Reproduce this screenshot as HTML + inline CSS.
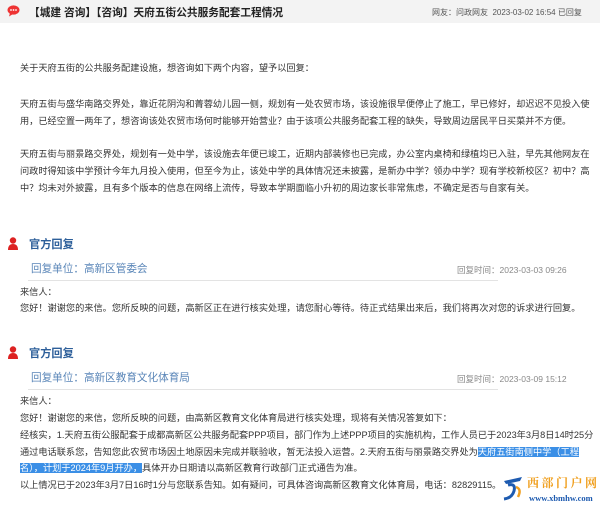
<!DOCTYPE html><html><head><meta charset="utf-8"><style>
body{margin:0;width:600px;height:508px;background:#fff;font-family:"Liberation Sans","Noto Sans CJK SC",sans-serif;color:#333;position:relative;overflow:hidden}
.a{position:absolute;white-space:nowrap;font-size:9.2px}
.hd{position:absolute;left:0;top:0;width:600px;height:23px;background:#f3f3f3}
.blue{color:#2d5f9a}
.sub{color:#5a86b8;font-size:10.6px}
.gr{color:#888;font-size:8.5px}
.line{position:absolute;height:1px;background:#e3e3e3}
.hl{background:#3b8fe6;color:#fff}
</style></head><body>
<div class="hd"></div>
<svg style="position:absolute;left:7px;top:5px" width="13" height="12" viewBox="0 0 13 12"><ellipse cx="6.5" cy="5" rx="6" ry="4.6" fill="#e33"/><path d="M3 8 L2 11.5 L6 9" fill="#e33"/><circle cx="4" cy="5" r=".9" fill="#fff"/><circle cx="6.5" cy="5" r=".9" fill="#fff"/><circle cx="9" cy="5" r=".9" fill="#fff"/></svg>
<div class="a" style="left:29px;top:5px;font-size:10.7px;font-weight:bold;color:#222">【城建 咨询】【咨询】天府五街公共服务配套工程情况</div>
<div class="a" style="left:432px;top:7px;font-size:8px;color:#555">网友：问政网友&nbsp; 2023-03-02 16:54 已回复</div>
<div class="a" style="left:20px;top:60px">关于天府五街的公共服务配建设施，想咨询如下两个内容，望予以回复：</div>
<div class="a" style="left:20px;top:96px">天府五街与盛华南路交界处，靠近花阴沟和菁蓉幼儿园一侧，规划有一处农贸市场，该设施很早便停止了施工，早已修好，却迟迟不见投入使</div>
<div class="a" style="left:20px;top:113px">用，已经空置一两年了，想咨询该处农贸市场何时能够开始营业？由于该项公共服务配套工程的缺失，导致周边居民平日买菜并不方便。</div>
<div class="a" style="left:20px;top:146px">天府五街与丽景路交界处，规划有一处中学，该设施去年便已竣工，近期内部装修也已完成，办公室内桌椅和绿植均已入驻，早先其他网友在</div>
<div class="a" style="left:20px;top:163px">问政时得知该中学预计今年九月投入使用，但至今为止，该处中学的具体情况还未披露，是新办中学？领办中学？现有学校新校区？初中？高</div>
<div class="a" style="left:20px;top:180px">中？均未对外披露，且有多个版本的信息在网络上流传，导致本学期面临小升初的周边家长非常焦虑，不确定是否与自家有关。</div>
<svg style="position:absolute;left:7px;top:237px" width="12" height="13" viewBox="0 0 12 13"><circle cx="6" cy="3.5" r="3.2" fill="#d22"/><path d="M1 13 Q1 7 6 7 Q11 7 11 13Z" fill="#d22"/></svg>
<div class="a blue" style="left:29px;top:236px;font-size:11.2px;font-weight:bold">官方回复</div>
<div class="a sub" style="left:31px;top:261px">回复单位：高新区管委会</div>
<div class="a gr" style="left:457px;top:264px">回复时间：2023-03-03 09:26</div>
<div class="line" style="left:28px;top:280px;width:470px"></div>
<div class="a" style="left:20px;top:284px">来信人：</div>
<div class="a" style="left:20px;top:300px">您好！谢谢您的来信。您所反映的问题，高新区正在进行核实处理，请您耐心等待。待正式结果出来后，我们将再次对您的诉求进行回复。</div>
<svg style="position:absolute;left:7px;top:346px" width="12" height="13" viewBox="0 0 12 13"><circle cx="6" cy="3.5" r="3.2" fill="#d22"/><path d="M1 13 Q1 7 6 7 Q11 7 11 13Z" fill="#d22"/></svg>
<div class="a blue" style="left:29px;top:345px;font-size:11.2px;font-weight:bold">官方回复</div>
<div class="a sub" style="left:31px;top:370px">回复单位：高新区教育文化体育局</div>
<div class="a gr" style="left:457px;top:373px">回复时间：2023-03-09 15:12</div>
<div class="line" style="left:28px;top:389px;width:470px"></div>
<div class="a" style="left:20px;top:393px">来信人：</div>
<div class="a" style="left:20px;top:410px">您好！谢谢您的来信，您所反映的问题，由高新区教育文化体育局进行核实处理，现将有关情况答复如下：</div>
<div class="a" style="left:20px;top:427px">经核实，1.天府五街公服配套于成都高新区公共服务配套PPP项目，部门作为上述PPP项目的实施机构，工作人员已于2023年3月8日14时25分</div>
<div class="a" style="left:20px;top:444px">通过电话联系您，告知您此农贸市场因土地原因未完成并联验收，暂无法投入运营。2.天府五街与丽景路交界处为<span class="hl">天府五街南侧中学（工程</span></div>
<div class="a" style="left:20px;top:460px"><span class="hl">名），计划于2024年9月开办，</span>具体开办日期请以高新区教育行政部门正式通告为准。</div>
<div class="a" style="left:20px;top:477px">以上情况已于2023年3月7日16时1分与您联系告知。如有疑问，可具体咨询高新区教育文化体育局，电话：82829115。</div>
<div style="position:absolute;left:500px;top:472px;width:100px;height:36px;background:#fff"></div>
<svg style="position:absolute;left:502px;top:475px" width="22" height="26" viewBox="0 0 22 26"><path d="M2 6 L20 2 L18 6 L4 9Z" fill="#1e5bb0"/><path d="M6 10 Q14 8 12 16 Q10 23 2 24" stroke="#1e5bb0" stroke-width="3" fill="none"/><path d="M14 12 Q20 14 16 22" stroke="#f0a020" stroke-width="2.5" fill="none"/></svg>
<div class="a" style="left:527px;top:474px;font-size:12px;font-weight:bold;color:#f0a020;letter-spacing:2.5px;font-family:'Noto Serif CJK SC',serif">西部门户网</div>
<div class="a" style="left:529px;top:493px;font-size:8.5px;font-weight:bold;color:#1e5bb0;font-family:'Liberation Serif',serif">www.xbmhw.com</div>
</body></html>
